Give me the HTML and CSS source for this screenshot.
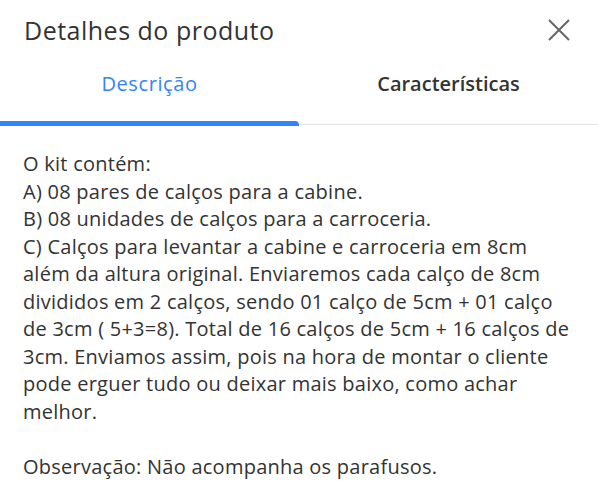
FILE: index.html
```html
<!DOCTYPE html>
<html lang="pt-BR">
<head>
  <meta charset="UTF-8">
  <meta name="viewport" content="width=device-width, initial-scale=1.0">
  <title>Detalhes do produto</title>
  <link rel="stylesheet" href="styles.css">
</head>
<body>
  <header class="modal-header">
    <h1>Detalhes do produto</h1>
    <button type="button" class="close" aria-label="Fechar">
      <svg width="22" height="22" viewBox="0 0 22 22">
        <path d="M1 1 L21 21 M21 1 L1 21" stroke="#666" stroke-width="2" fill="none"/>
      </svg>
    </button>
  </header>

  <nav class="tabs">
    <button type="button" class="tab active">Descrição</button>
    <button type="button" class="tab">Características</button>
  </nav>

  <div class="description">
    <p>
      O kit contém:<br>
      A) 08 pares de calços para a cabine.<br>
      B) 08 unidades de calços para a carroceria.<br>
      C) Calços para levantar a cabine e carroceria em 8cm além da altura original. Enviaremos cada calço de 8cm divididos em 2 calços, sendo 01 calço de 5cm + 01 calço de 3cm ( 5+3=8). Total de 16 calços de 5cm + 16 calços de 3cm. Enviamos assim, pois na hora de montar o cliente pode erguer tudo ou deixar mais baixo, como achar melhor.
    </p>
    <p>Observação: Não acompanha os parafusos.</p>
  </div>
</body>
</html>
```

FILE: styles.css
```css
body {
  margin: 0;
  background: #ffffff;
  font-family: "Open Sans", Lato, sans-serif;
  color: #333333;
}

.modal-header {
  display: flex;
  align-items: center;
  justify-content: space-between;
  padding: 12px 28px 0 24px;
  height: 36px;
}

.modal-header h1 {
  margin: 0;
  font-size: 25px;
  font-weight: 400;
  letter-spacing: 0.5px;
  color: #333333;
}

.close {
  border: none;
  background: none;
  padding: 0;
  display: flex;
}

.tabs {
  display: grid;
  grid-template-columns: 1fr 1fr;
  margin-top: 18px;
  border-bottom: 1px solid #e5e5e5;
}

.tab {
  border: none;
  background: none;
  font-family: inherit;
  font-size: 20px;
  font-weight: 600;
  color: #333333;
  padding: 4px 0 27px;
  position: relative;
}

.tab.active {
  color: #3483fa;
  font-weight: 400;
  letter-spacing: 0.6px;
}

.tab.active::after {
  content: "";
  position: absolute;
  left: 0;
  right: 0;
  bottom: -2px;
  height: 5px;
  background: #3483fa;
  border-radius: 0 4px 0 0;
}

.description {
  padding: 25px 24px 0 23px;
  font-size: 20px;
  line-height: 27.5px;
  letter-spacing: 0.25px;
}

.description p {
  margin: 0 0 27.5px;
}
```
